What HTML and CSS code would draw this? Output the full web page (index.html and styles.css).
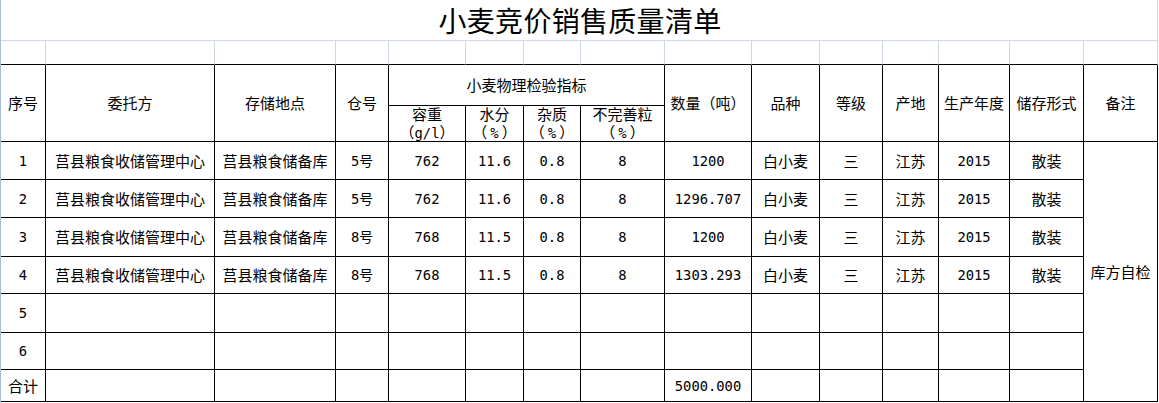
FILE: index.html
```html
<!DOCTYPE html>
<html lang="zh-CN">
<head>
<meta charset="utf-8">
<title>小麦竞价销售质量清单</title>
<link rel="stylesheet" href="styles.css">
</head>
<body>
<div class="sheet">
  <div class="cell title">小麦竞价销售质量清单</div>

  <div class="cell blank"></div><div class="cell blank"></div><div class="cell blank"></div><div class="cell blank"></div><div class="cell blank"></div>
  <div class="cell blank"></div><div class="cell blank"></div><div class="cell blank"></div><div class="cell blank"></div><div class="cell blank"></div>
  <div class="cell blank"></div><div class="cell blank"></div><div class="cell blank"></div><div class="cell blank"></div><div class="cell blank"></div>

  <div class="cell r2">序号</div>
  <div class="cell r2">委托方</div>
  <div class="cell r2">存储地点</div>
  <div class="cell r2">仓号</div>
  <div class="cell c4">小麦物理检验指标</div>
  <div class="cell r2">数量（吨）</div>
  <div class="cell r2">品种</div>
  <div class="cell r2">等级</div>
  <div class="cell r2">产地</div>
  <div class="cell r2">生产年度</div>
  <div class="cell r2">储存形式</div>
  <div class="cell r2">备注</div>
  <div class="cell two"><span class="line">容重</span><span class="line">（<span class="num">g/l</span>）</span></div>
  <div class="cell two"><span class="line">水分</span><span class="line">（<span class="pct">%</span>）</span></div>
  <div class="cell two"><span class="line">杂质</span><span class="line">（<span class="pct">%</span>）</span></div>
  <div class="cell two"><span class="line">不完善粒</span><span class="line">（<span class="pct">%</span>）</span></div>

  <div class="cell num">1</div><div class="cell">莒县粮食收储管理中心</div><div class="cell">莒县粮食储备库</div><div class="cell num">5号</div>
  <div class="cell num">762</div><div class="cell num">11.6</div><div class="cell num">0.8</div><div class="cell num">8</div>
  <div class="cell num">1200</div><div class="cell">白小麦</div><div class="cell">三</div><div class="cell">江苏</div><div class="cell num">2015</div><div class="cell">散装</div>
  <div class="cell r7">库方自检</div>

  <div class="cell num">2</div><div class="cell">莒县粮食收储管理中心</div><div class="cell">莒县粮食储备库</div><div class="cell num">5号</div>
  <div class="cell num">762</div><div class="cell num">11.6</div><div class="cell num">0.8</div><div class="cell num">8</div>
  <div class="cell num">1296.707</div><div class="cell">白小麦</div><div class="cell">三</div><div class="cell">江苏</div><div class="cell num">2015</div><div class="cell">散装</div>

  <div class="cell num">3</div><div class="cell">莒县粮食收储管理中心</div><div class="cell">莒县粮食储备库</div><div class="cell num">8号</div>
  <div class="cell num">768</div><div class="cell num">11.5</div><div class="cell num">0.8</div><div class="cell num">8</div>
  <div class="cell num">1200</div><div class="cell">白小麦</div><div class="cell">三</div><div class="cell">江苏</div><div class="cell num">2015</div><div class="cell">散装</div>

  <div class="cell num">4</div><div class="cell">莒县粮食收储管理中心</div><div class="cell">莒县粮食储备库</div><div class="cell num">8号</div>
  <div class="cell num">768</div><div class="cell num">11.5</div><div class="cell num">0.8</div><div class="cell num">8</div>
  <div class="cell num">1303.293</div><div class="cell">白小麦</div><div class="cell">三</div><div class="cell">江苏</div><div class="cell num">2015</div><div class="cell">散装</div>

  <div class="cell num">5</div><div class="cell"></div><div class="cell"></div><div class="cell"></div><div class="cell"></div><div class="cell"></div><div class="cell"></div>
  <div class="cell"></div><div class="cell"></div><div class="cell"></div><div class="cell"></div><div class="cell"></div><div class="cell"></div><div class="cell"></div>

  <div class="cell num">6</div><div class="cell"></div><div class="cell"></div><div class="cell"></div><div class="cell"></div><div class="cell"></div><div class="cell"></div>
  <div class="cell"></div><div class="cell"></div><div class="cell"></div><div class="cell"></div><div class="cell"></div><div class="cell"></div><div class="cell"></div>

  <div class="cell">合计</div><div class="cell"></div><div class="cell"></div><div class="cell"></div><div class="cell"></div><div class="cell"></div><div class="cell"></div>
  <div class="cell"></div><div class="cell num">5000.000</div><div class="cell"></div><div class="cell"></div><div class="cell"></div><div class="cell"></div><div class="cell"></div>
</div>
</body>
</html>
```

FILE: styles.css
```css
html, body {
  margin: 0;
  padding: 0;
  background: #ffffff;
}

body {
  font-family: "Noto Sans CJK SC", "Noto Sans", sans-serif;
  color: #000000;
  height: 403px;
  overflow: hidden;
  text-spacing-trim: space-all;
  font-feature-settings: "chws" 0, "halt" 0, "palt" 0;
}

.sheet {
  width: 1157px;
  height: 403px;
  border-left: 1px solid #a7bcd9;
  display: grid;
  grid-template-columns: 45px 169px 121px 53px 77px 58px 57px 84px 87px 68px 63px 56px 71px 74px 74px;
  grid-template-rows: 41px 24px 41px 36px 38px 38px 39px 37px 39px 37px 32px;
  align-content: start;
}

.cell {
  box-sizing: border-box;
  border-right: 1px solid #000000;
  border-bottom: 1px solid #000000;
  display: flex;
  align-items: center;
  justify-content: center;
  text-align: center;
  font-size: 15px;
  line-height: 18px;
  white-space: nowrap;
  overflow: hidden;
}

.title {
  grid-column: 1 / -1;
  border-right-color: #d0d8e6;
  border-bottom-color: #d0d8e6;
  font-size: 28px;
  line-height: 32px;
  letter-spacing: 0.3px;
  padding-left: 2px;
}

.blank {
  border-right-color: #d0d8e6;
}

.r2 {
  grid-row: span 2;
}

.c4 {
  grid-column: span 4;
}

.r7 {
  grid-row: span 7;
}

.two {
  flex-direction: column;
  line-height: 17.5px;
  overflow: visible;
}

.line {
  display: block;
}

.pct {
  font-family: "DejaVu Sans Mono", monospace;
  font-size: 13.8px;
  margin: 0 3px;
}

.num {
  font-family: "DejaVu Sans Mono", "Noto Sans CJK SC", monospace;
  font-size: 13.8px;
}
```
